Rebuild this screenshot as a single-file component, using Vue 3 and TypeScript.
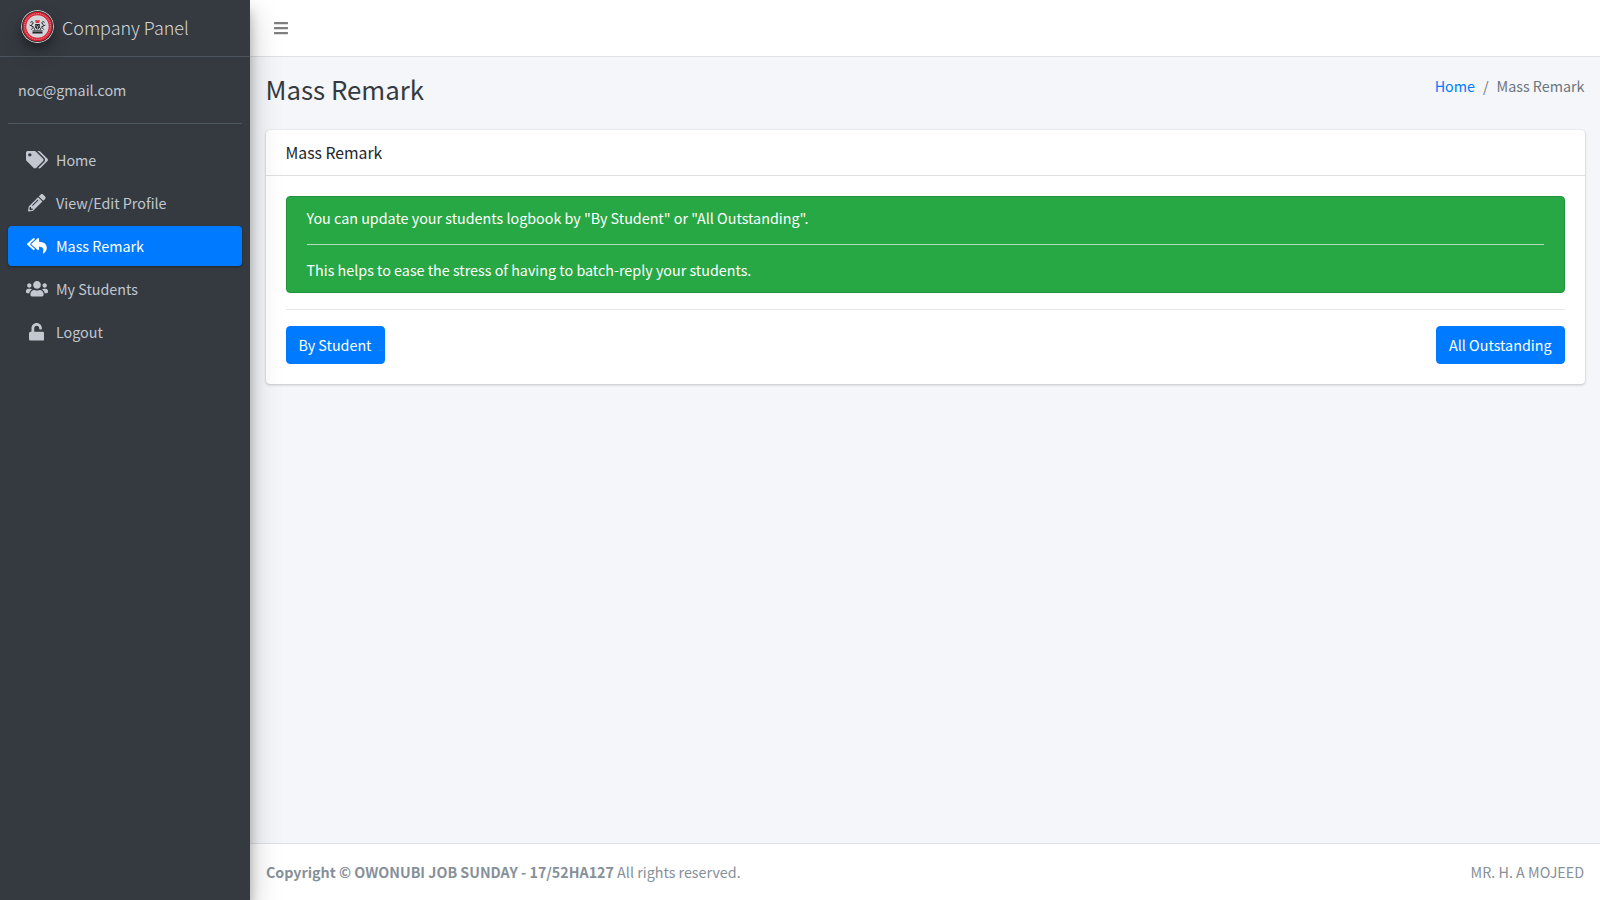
<script setup lang="ts">
interface NavItem {
  label: string
  width: number
  path: string
  active?: boolean
}

const navItems: NavItem[] = [
  {
    label: 'Home',
    width: 640,
    path: 'M497.941 225.941L286.059 14.059A48 48 0 0 0 252.118 0H48C21.49 0 0 21.49 0 48v204.118a48 48 0 0 0 14.059 33.941l211.882 211.882c18.744 18.745 49.136 18.746 67.882 0l204.118-204.118c18.745-18.745 18.745-49.137 0-67.882zM112 160c-26.51 0-48-21.49-48-48s21.49-48 48-48 48 21.49 48 48-21.49 48-48 48zm513.941 133.823L421.823 497.941c-18.745 18.745-49.137 18.745-67.882 0l-.36-.36L527.64 323.522c16.999-16.999 26.36-39.6 26.36-63.64s-9.362-46.641-26.36-63.64L331.397 0h48.721a48 48 0 0 1 33.941 14.059l211.882 211.882c18.745 18.745 18.745 49.137 0 67.882z',
  },
  {
    label: 'View/Edit Profile',
    width: 512,
    path: 'M497.9 142.1l-46.1 46.1c-4.7 4.7-12.3 4.7-17 0l-111-111c-4.7-4.7-4.7-12.3 0-17l46.1-46.1c18.7-18.7 49.1-18.7 67.9 0l60.1 60.1c18.8 18.7 18.8 49.1 0 67.9zM284.2 99.8L21.6 362.4.4 483.9c-2.9 16.4 11.4 30.6 27.8 27.8l121.5-21.3 262.6-262.6c4.7-4.7 4.7-12.3 0-17l-111-111c-4.8-4.7-12.4-4.7-17.1 0zM124.1 339.9c-5.5-5.5-5.5-14.3 0-19.8l154-154c5.5-5.5 14.3-5.5 19.8 0s5.5 14.3 0 19.8l-154 154c-5.5 5.5-14.3 5.5-19.8 0zM88 424h48v36.3l-64.5 11.3-31.1-31.1L51.7 376H88v48z',
  },
  {
    label: 'Mass Remark',
    width: 576,
    active: true,
    path: 'M136.309 189.836L312.313 37.851C327.72 24.546 352 35.348 352 56.015v82.763c129.182 10.231 224 52.212 224 183.548 0 61.441-39.582 122.309-83.333 154.132-13.653 9.931-33.111-2.533-28.077-18.631 38.512-123.162-3.922-169.482-112.59-182.015v84.175c0 20.701-24.3 31.453-39.687 18.164L136.309 226.164c-11.071-9.561-11.086-26.753 0-36.328zm-128 36.328L184.313 378.15C199.7 391.439 224 380.687 224 359.986v-15.818l-108.606-93.785A55.96 55.96 0 0 1 96 207.998a55.953 55.953 0 0 1 19.393-42.38L224 71.832V56.015c0-20.667-24.28-31.469-39.687-18.164L8.309 189.836c-11.086 9.575-11.071 26.767 0 36.328z',
  },
  {
    label: 'My Students',
    width: 640,
    path: 'M96 224c35.3 0 64-28.7 64-64s-28.7-64-64-64-64 28.7-64 64 28.7 64 64 64zm448 0c35.3 0 64-28.7 64-64s-28.7-64-64-64-64 28.7-64 64 28.7 64 64 64zm32 32h-64c-17.6 0-33.5 7.1-45.1 18.6 40.3 22.1 68.9 62 75.1 109.4h66c17.7 0 32-14.3 32-32v-32c0-35.3-28.7-64-64-64zm-256 0c61.9 0 112-50.1 112-112S381.9 32 320 32 208 82.1 208 144s50.1 112 112 112zm76.8 32h-8.3c-20.8 10-43.9 16-68.5 16s-47.6-6-68.5-16h-8.3C179.6 288 128 339.6 128 403.2V432c0 26.5 21.5 48 48 48h288c26.5 0 48-21.5 48-48v-28.8c0-63.6-51.6-115.2-115.2-115.2zm-223.7-13.4C161.5 263.1 145.6 256 128 256H64c-35.3 0-64 28.7-64 64v32c0 17.7 14.3 32 32 32h65.9c6.3-47.4 34.9-87.3 75.2-109.4z',
  },
  {
    label: 'Logout',
    width: 448,
    path: 'M400 256H152V152.9c0-39.6 31.7-72.5 71.3-72.9 40-.4 72.7 32.1 72.7 72v16c0 13.3 10.7 24 24 24h32c13.3 0 24-10.7 24-24v-16C376 68 307.5-.3 223.5 0 139.5.3 72 69.5 72 153.5V256H48c-26.5 0-48 21.5-48 48v160c0 26.5 21.5 48 48 48h352c26.5 0 48-21.5 48-48V304c0-26.5-21.5-48-48-48z',
  },
]
</script>

<template>
  <div class="wrapper">
    <aside class="sidebar">
      <a class="brand">
        <svg class="brand-logo" viewBox="0 0 33 33">
          <circle cx="16.5" cy="16.5" r="16.5" fill="#d5d7da" />
          <circle cx="16.5" cy="16.5" r="15.6" fill="#26282c" />
          <circle cx="16.5" cy="16.5" r="14.8" fill="#d81e2f" />
          <circle cx="16.5" cy="16.5" r="12.9" fill="none" stroke="#ea7681" stroke-width="1.3" stroke-dasharray="1.1 .8" />
          <circle cx="16.5" cy="16.5" r="11.2" fill="#d4d5da" />
          <path d="M14 10.2h5l-.9 2.9h-3.2z" fill="#d8323c" />
          <path d="M14.2 14h4.6v3.6l-2.3 2.4-2.3-2.4z" fill="#25272b" />
          <path d="M16.5 16v3.5M15 15.3l1.5 1.4 1.5-1.4" fill="none" stroke="#dcdde2" stroke-width=".6" />
          <path d="M12.8 13.2l-1.8-1.7-1.6.8M11.6 13l-1.2 3 2.4 1M10.4 16l-1.8-1M12.4 17l-2.2 2.7M12.8 17.6l1.2 2.4M20.2 13.2l1.8-1.7 1.6.8M21.4 13l1.2 3-2.4 1M22.6 16l1.8-1M20.6 17l2.2 2.7M20.2 17.6l-1.2 2.4" fill="none" stroke="#34363a" stroke-width="1" />
          <path d="M11.5 20h10v1.3h-10z" fill="#6b6d70" />
          <path d="M11.5 21.6h10v2h-10z" fill="#222428" />
        </svg>
        <span class="brand-text">Company Panel</span>
      </a>
      <div class="sidebar-body">
        <div class="user-panel">noc@gmail.com</div>
        <nav class="nav">
          <a v-for="item in navItems" :key="item.label" class="nav-link" :class="{ active: item.active }">
            <span class="nav-icon">
              <svg :viewBox="`0 0 ${item.width} 512`"><path :d="item.path" /></svg>
            </span>
            <span>{{ item.label }}</span>
          </a>
        </nav>
      </div>
    </aside>

    <div class="main">
      <header class="topbar">
        <svg class="bars" viewBox="0 0 448 512">
          <path d="M16 132h416c8.8 0 16-7.2 16-16V76c0-8.8-7.2-16-16-16H16C7.2 60 0 67.2 0 76v40c0 8.8 7.2 16 16 16zm0 160h416c8.8 0 16-7.2 16-16v-40c0-8.8-7.2-16-16-16H16c-8.8 0-16 7.2-16 16v40c0 8.8 7.2 16 16 16zm0 160h416c8.8 0 16-7.2 16-16v-40c0-8.8-7.2-16-16-16H16c-8.8 0-16 7.2-16 16v40c0 8.8 7.2 16 16 16z" />
        </svg>
      </header>

      <main class="content">
        <div class="content-header">
          <h1>Mass Remark</h1>
          <ol class="breadcrumb">
            <li><a>Home</a></li>
            <li class="sep">/</li>
            <li>Mass Remark</li>
          </ol>
        </div>

        <section class="card">
          <div class="card-header"><h3>Mass Remark</h3></div>
          <div class="card-body">
            <div class="alert">
              <p>You can update your students logbook by "By Student" or "All Outstanding".</p>
              <hr />
              <p>This helps to ease the stress of having to batch-reply your students.</p>
            </div>
            <hr />
            <div class="actions">
              <button type="button" class="btn">By Student</button>
              <button type="button" class="btn">All Outstanding</button>
            </div>
          </div>
        </section>
      </main>

      <footer class="footer">
        <div><strong>Copyright © OWONUBI JOB SUNDAY - 17/52HA127</strong> All rights reserved.</div>
        <div>MR. H. A MOJEED</div>
      </footer>
    </div>
  </div>
</template>

<style>
body {
  margin: 0;
  overflow: hidden;
}
</style>

<style scoped>
* {
  box-sizing: border-box;
}
.wrapper {
  display: flex;
  height: 100vh;
  background: #f4f6f9;
  color: #212529;
  font-family: "Source Sans Pro", "Noto Sans CJK SC", "Noto Sans", sans-serif;
  font-size: 14.32px;
  line-height: 24px;
}
.sidebar {
  position: relative;
  z-index: 2;
  flex: 0 0 250px;
  background: #343a40;
  color: #c2c7d0;
  box-shadow: 0 14px 28px rgba(0, 0, 0, 0.25), 0 10px 10px rgba(0, 0, 0, 0.22);
}
.brand {
  display: flex;
  height: 57px;
  padding: 10px 8px 0 21px;
  border-bottom: 1px solid #4b545c;
}
.brand-logo {
  width: 33px;
  height: 33px;
  margin-right: 8px;
  border-radius: 50%;
  box-shadow: 0 10px 20px rgba(0, 0, 0, 0.19), 0 6px 6px rgba(0, 0, 0, 0.23);
}
.brand-text {
  font-size: 17.95px;
  font-weight: 300;
  line-height: 34px;
  color: rgba(255, 255, 255, 0.8);
}
.sidebar-body {
  padding: 0 8px;
}
.user-panel {
  height: 67px;
  margin-bottom: 16px;
  padding: 21px 10px 0;
  border-bottom: 1px solid #4f5962;
}
.nav {
  display: flex;
  flex-direction: column;
  gap: 3px;
}
.nav-link {
  display: flex;
  height: 40px;
  padding: 8px 16px;
  border-radius: 4px;
}
.nav-link.active {
  background: #007bff;
  color: #fff;
  box-shadow: 0 1px 3px rgba(0, 0, 0, 0.12), 0 1px 2px rgba(0, 0, 0, 0.24);
}
.nav-icon {
  display: flex;
  justify-content: center;
  width: 25.6px;
  margin: 3px 6.4px 0 0;
}
.nav-icon svg {
  height: 17.6px;
  flex: none;
  fill: currentColor;
}
.main {
  display: flex;
  flex: 1;
  flex-direction: column;
  min-width: 0;
}
.topbar {
  display: flex;
  align-items: center;
  height: 57px;
  padding-left: 24px;
  background: #fff;
  border-bottom: 1px solid #dee2e6;
}
.bars {
  width: 14px;
  height: 16px;
  fill: rgba(0, 0, 0, 0.5);
}
.content {
  flex: 1;
  padding: 15px 15.5px 0;
}
.content-header {
  display: flex;
  justify-content: space-between;
  height: 57.56px;
}
h1 {
  margin: 0;
  font-size: 25.8px;
  font-weight: 400;
  line-height: 34.56px;
  color: #343a40;
}
.breadcrumb {
  display: flex;
  gap: 8px;
  margin: 1.5px 0 0;
  padding: 0;
  list-style: none;
  color: #6c757d;
}
.breadcrumb a {
  color: #007bff;
}
.card {
  background: #fff;
  border-radius: 4px;
  box-shadow: 0 0 1px rgba(0, 0, 0, 0.125), 0 1px 3px rgba(0, 0, 0, 0.2);
}
.card-header {
  padding: 12px 20px;
  border-bottom: 1px solid rgba(0, 0, 0, 0.125);
}
h3 {
  margin: 0;
  font-size: 15.75px;
  font-weight: 400;
  line-height: 21.1px;
}
.card-body {
  padding: 20px;
}
hr {
  height: 0;
  margin: 16px 0;
  border: 0;
  border-top: 1px solid rgba(0, 0, 0, 0.1);
}
.alert {
  padding: 11.2px 20px 12.8px;
  background: #28a745;
  border: 1px solid #23923d;
  border-radius: 4px;
  color: #fff;
  line-height: 19.2px;
}
.alert p {
  margin: 0;
}
.alert hr {
  margin: 16.8px 0 15.2px;
  border-top-color: #b1dfbb;
}
.actions {
  display: flex;
  justify-content: space-between;
}
.btn {
  height: 38px;
  padding: 6px 12px;
  border: 1px solid #007bff;
  border-radius: 4px;
  background: #007bff;
  color: #fff;
  font: inherit;
}
.footer {
  display: flex;
  justify-content: space-between;
  height: 57px;
  padding: 16px;
  background: #fff;
  border-top: 1px solid #dee2e6;
  color: #869099;
}
.footer strong {
  font-size: 14.28px;
}
</style>
